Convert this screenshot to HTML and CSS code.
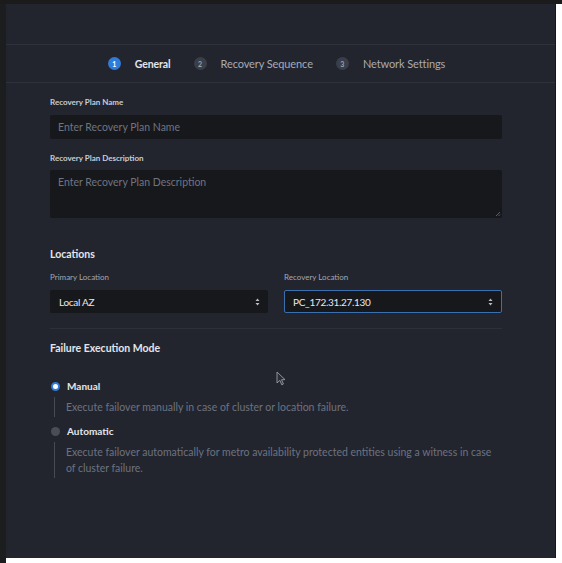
FILE: index.html
```html
<!DOCTYPE html>
<html>
<head>
<meta charset="utf-8">
<link rel="stylesheet" href="styles.css">
</head>
<body>
<div class="screen">
  <div class="topbar"></div>
  <div class="row">
    <div class="leftbar"></div>
    <div class="panel">
      <div class="header"></div>
      <div class="stepper">
        <div class="step active"><span class="num">1</span><span class="step-label">General</span></div>
        <div class="step"><span class="num">2</span><span class="step-label">Recovery Sequence</span></div>
        <div class="step"><span class="num">3</span><span class="step-label">Network Settings</span></div>
      </div>
      <div class="form">
        <div class="field">
          <div class="label">Recovery Plan Name</div>
          <div class="input">Enter Recovery Plan Name</div>
        </div>
        <div class="field">
          <div class="label">Recovery Plan Description</div>
          <div class="textarea">Enter Recovery Plan Description
            <svg class="grip" width="6" height="6" viewBox="0 0 6 6"><path d="M5 1 L1 5 M5 3.5 L3.5 5" stroke="#6d717c" stroke-width="0.8"/></svg>
          </div>
        </div>
        <div class="section">
          <div class="section-title">Locations</div>
          <div class="cols">
            <div class="col">
              <div class="label light">Primary Location</div>
              <div class="select">Local AZ<svg class="arrows" width="5" height="8" viewBox="0 0 5 8"><path d="M2.5 0.5 L4.5 3 H0.5Z M2.5 7.5 L4.5 5 H0.5Z" fill="#b9bcc4"/></svg></div>
            </div>
            <div class="col">
              <div class="label light">Recovery Location</div>
              <div class="select focus">PC_172.31.27.130<svg class="arrows" width="5" height="8" viewBox="0 0 5 8"><path d="M2.5 0.5 L4.5 3 H0.5Z M2.5 7.5 L4.5 5 H0.5Z" fill="#b9bcc4"/></svg></div>
            </div>
          </div>
        </div>
        <div class="divider"></div>
        <div class="section mode">
          <div class="section-title">Failure Execution Mode</div>
          <div class="options">
            <div class="option">
              <div class="opt-head"><span class="radio checked"></span><span class="opt-label">Manual</span></div>
              <div class="opt-desc">Execute failover manually in case of cluster or location failure.</div>
            </div>
            <div class="option">
              <div class="opt-head"><span class="radio"></span><span class="opt-label">Automatic</span></div>
              <div class="opt-desc">Execute failover automatically for metro availability protected entities using a witness in case of cluster failure.</div>
            </div>
          </div>
        </div>
      </div>
      <svg class="cursor" width="10" height="15" viewBox="0 0 10 15"><path d="M1 1 L1 12 L3.8 9.4 L5.8 13.8 L7.4 13 L5.5 8.8 L9 8.6 Z" fill="#2a2d35" stroke="#9a9da6" stroke-width="0.9"/></svg>
    </div>
  </div>
</div>
</body>
</html>
```
FILE: styles.css
```css
html, body {
  margin: 0;
  padding: 0;
  background: #ffffff;
}
.screen {
  width: 562px;
  height: 563px;
  display: flex;
  flex-direction: column;
  font-family: Lato, "Open Sans", sans-serif;
  overflow: hidden;
}
.topbar {
  height: 4px;
  background: #1b1b1c;
}
.row {
  display: flex;
  flex: 1;
}
.leftbar {
  width: 6px;
  background: #1c1d1f;
}
.panel {
  position: relative;
  width: 549px;
  height: 554px;
  background: #22252e;
  border-right: 1px solid #15161a;
}
.header {
  height: 40px;
  border-bottom: 1px solid #2e323c;
}
.stepper {
  height: 37px;
  border-bottom: 1px solid #2e323c;
  display: flex;
  align-items: center;
  justify-content: center;
  gap: 23px;
  padding-right: 8px;
}
.step {
  display: flex;
  align-items: center;
  gap: 14px;
}
.num {
  width: 13px;
  height: 13px;
  border-radius: 50%;
  background: #3a3e48;
  color: #9ea2ab;
  font-size: 7px;
  font-weight: 700;
  display: flex;
  align-items: center;
  justify-content: center;
}
.step-label {
  font-size: 11px;
  color: #a7abb4;
  font-weight: 400;
  letter-spacing: -0.1px;
}
.step.active .num {
  background: #2f7bd9;
  color: #ffffff;
}
.step.active .step-label {
  color: #e3e5ea;
  font-weight: 700;
  font-size: 10.5px;
}
.form {
  padding: 14px 53px 0 44px;
}
.field {
  margin-bottom: 14px;
}
.label {
  font-size: 8px;
  line-height: 10px;
  font-weight: 700;
  color: #c9ccd3;
  margin-bottom: 8px;
}
.label.light {
  font-weight: 400;
  color: #a3a7b0;
}
.input, .textarea, .select {
  background: #17181c;
  border-radius: 2px;
  font-size: 10.5px;
  color: #6f7481;
  box-sizing: border-box;
  padding: 0 8px;
}
.input {
  height: 24px;
  line-height: 24px;
}
.field:nth-child(2) .label {
  margin-bottom: 7px;
}
.textarea {
  height: 48px;
  padding-top: 6px;
  position: relative;
}
.grip {
  position: absolute;
  right: 1px;
  bottom: 1px;
}
.section {
  padding-top: 16px;
}
.section-title {
  font-size: 10.5px;
  line-height: 12px;
  font-weight: 700;
  color: #e3e5ea;
}
.cols {
  display: grid;
  grid-template-columns: 218px 218px;
  column-gap: 16px;
  margin-top: 12px;
}
.cols .label {
  margin-bottom: 8px;
}
.select {
  height: 23px;
  display: flex;
  align-items: center;
  justify-content: space-between;
  color: #e6e8ec;
  padding: 0 8px 0 9px;
  font-size: 10px;
  letter-spacing: -0.3px;
}
.select.focus {
  border: 1px solid #3a6fb0;
  padding-left: 8px;
}
.arrows {
  display: block;
}
.divider {
  height: 1px;
  background: #2c3039;
  margin-top: 15px;
}
.section.mode {
  padding-top: 13px;
}
.options {
  margin-top: 26px;
}
.option {
  margin-bottom: 8px;
}
.opt-head {
  display: flex;
  align-items: center;
  height: 12px;
}
.radio {
  width: 9px;
  height: 9px;
  border-radius: 50%;
  background: #4a4d56;
  margin-left: 1px;
  margin-right: 7px;
  box-sizing: border-box;
}
.radio.checked {
  background: #ffffff;
  border: 2.5px solid #2f7bd9;
}
.opt-label {
  font-size: 10px;
  font-weight: 700;
  color: #e3e5ea;
}
.opt-desc {
  margin-left: 4px;
  margin-top: 5px;
  border-left: 1px solid #464a53;
  padding: 2px 0 2px 11px;
  font-size: 10.5px;
  line-height: 16px;
  color: #6d7280;
  max-width: 430px;
}
.cursor {
  position: absolute;
  left: 270px;
  top: 367px;
}
```
